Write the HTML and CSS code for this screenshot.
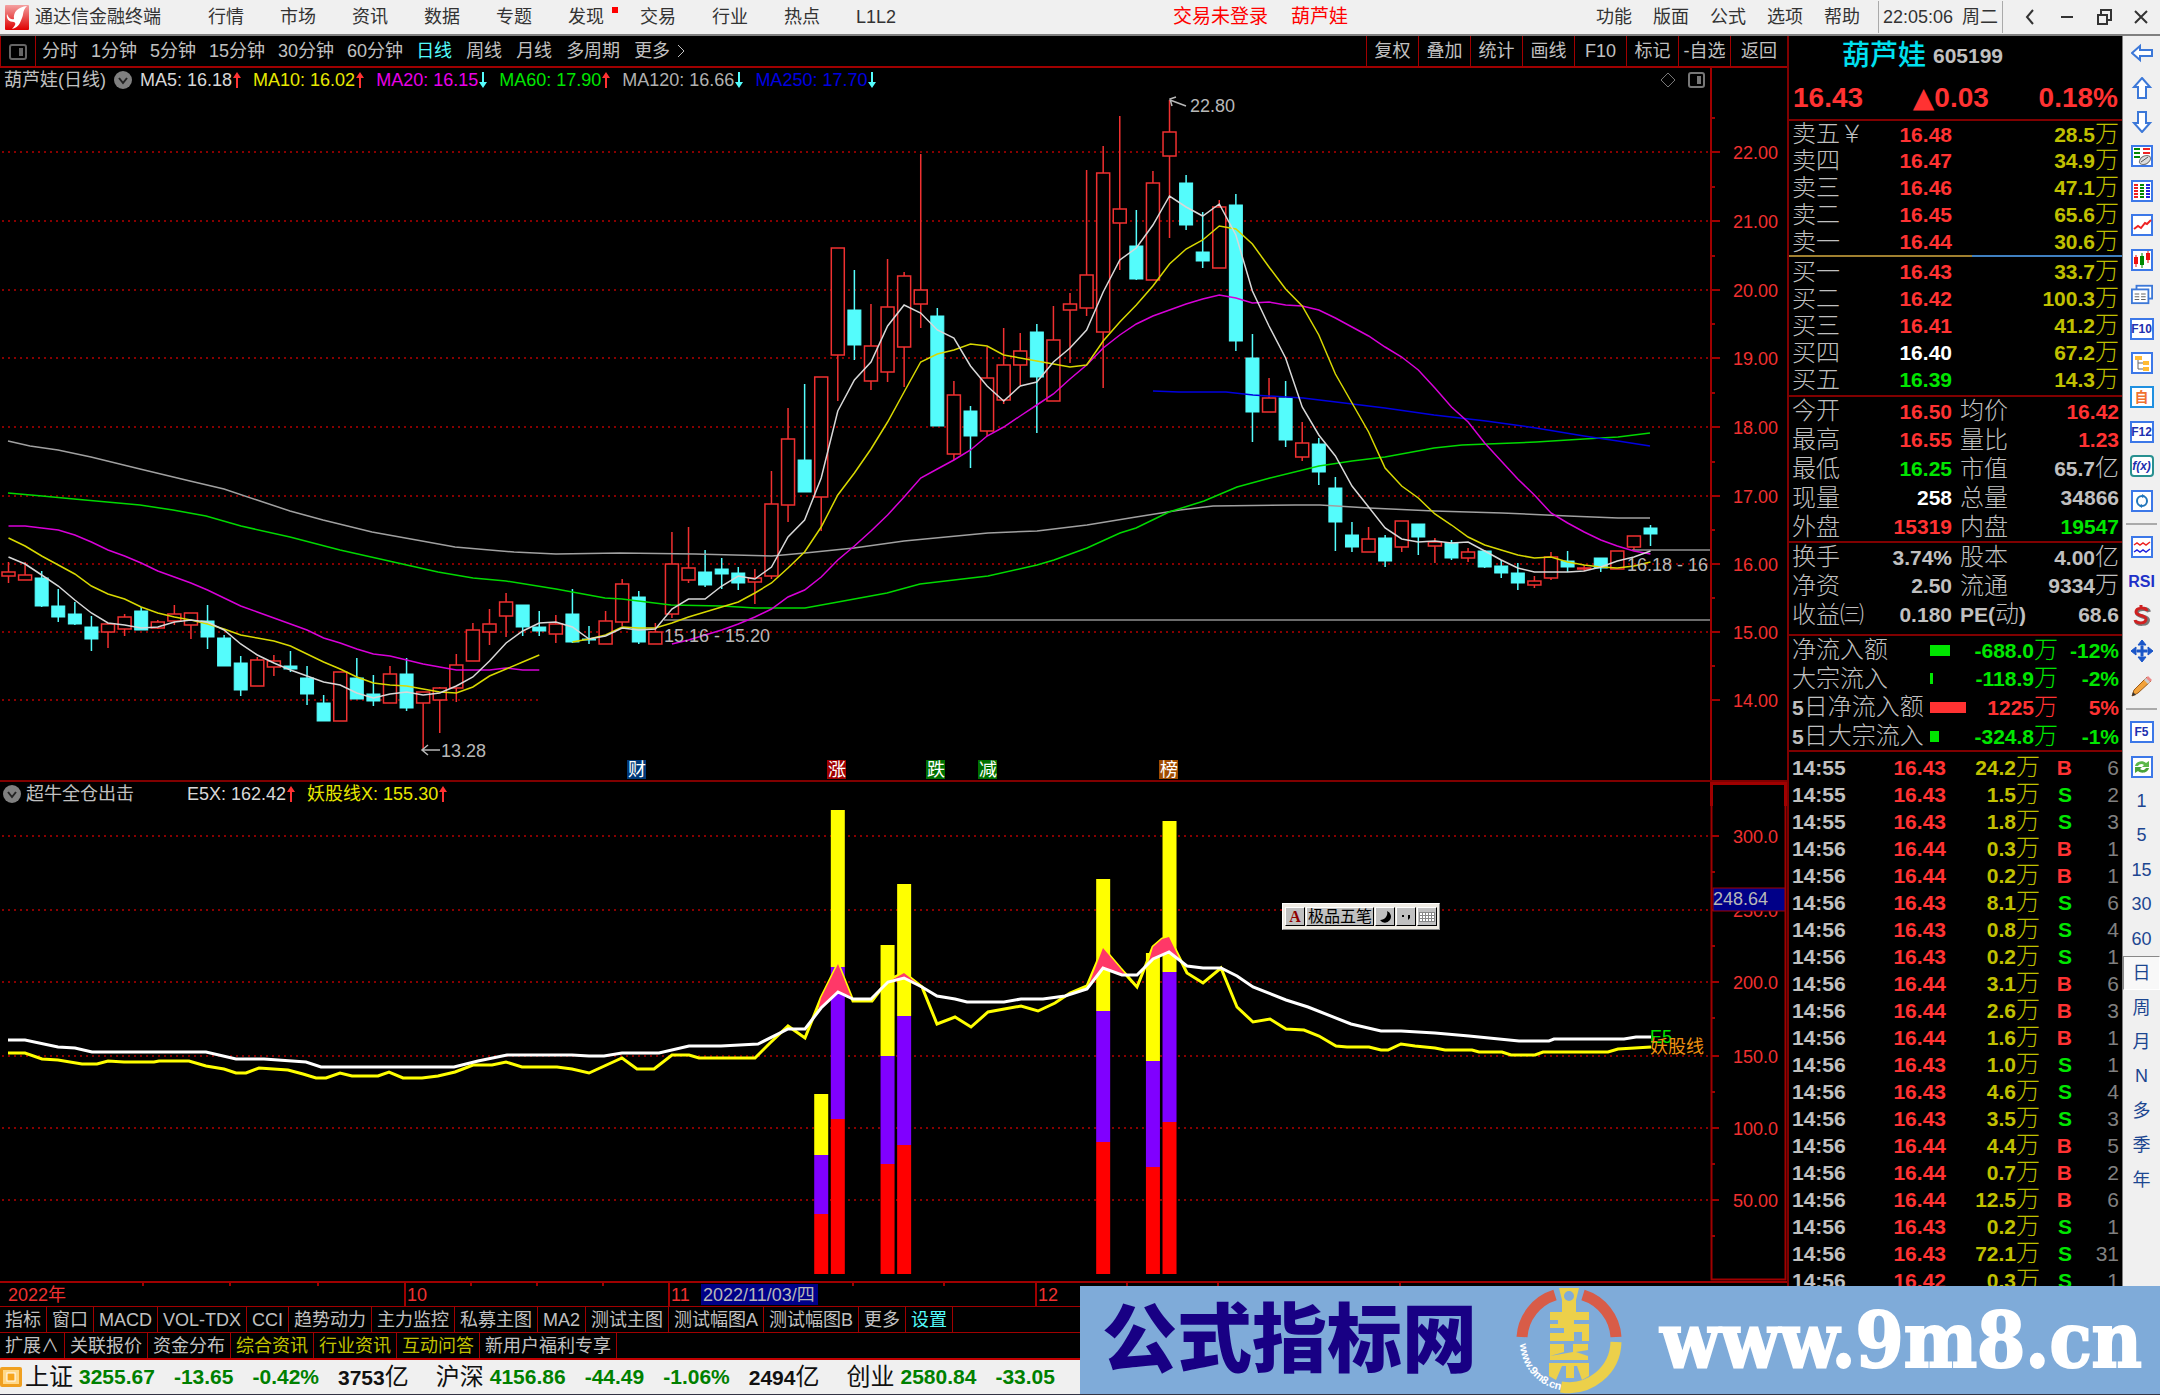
FILE: index.html
```html
<!DOCTYPE html>
<html lang="zh-CN">
<head>
  <meta charset="UTF-8">
  <title>通达信金融终端</title>
  <meta name="viewport" content="width=device-width, initial-scale=1.0">
  <link rel="stylesheet" href="styles.css">
</head>
<body>
  <header class="titlebar">
    <svg class="app-logo" viewBox="0 0 24 25">
      <defs>
        <linearGradient id="red" x1="0" y1="0" x2="0" y2="1">
          <stop offset="0" stop-color="#f4a0a0"/>
          <stop offset="0.5" stop-color="#e85050"/>
          <stop offset="1" stop-color="#e00000"/>
        </linearGradient>
      </defs>
      <rect width="24" height="25" rx="1" fill="url(#red)"/>
      <path d="M2 9 C4 14 7 15 9 14 C8 7 13 2 22 1 C17 6 19 9 17 13 C15 18 14 22 7 24 C11 20 11 18 9 17 C4 17 1 14 2 9 Z" fill="#fff"/>
    </svg>
    <h1 class="app-name">通达信金融终端</h1>
    <nav class="menu">
      <button>行情</button>
      <button>市场</button>
      <button>资讯</button>
      <button>数据</button>
      <button>专题</button>
      <button class="has-dot">发现</button>
      <button>交易</button>
      <button>行业</button>
      <button>热点</button>
      <button>L1L2</button>
    </nav>
    <div class="login">
      <span>交易未登录</span>
      <span>葫芦娃</span>
    </div>
    <nav class="menu menu-right">
      <button>功能</button>
      <button>版面</button>
      <button>公式</button>
      <button>选项</button>
      <button>帮助</button>
    </nav>
    <div class="clock"><time>22:05:06</time><span>周二</span></div>
    <div class="win-btns">
      <button aria-label="后退"><svg viewBox="0 0 16 20"><path d="M11 3 L5 10 L11 17"/></svg></button>
      <button aria-label="最小化"><svg viewBox="0 0 16 20"><path d="M2 10 H14"/></svg></button>
      <button aria-label="还原"><svg viewBox="0 0 16 20"><path d="M2 8 H11 V17 H2 Z M5 7 V3 H15 V13 H12"/></svg></button>
      <button aria-label="关闭"><svg viewBox="0 0 16 20"><path d="M2 4 L14 16 M14 4 L2 16"/></svg></button>
    </div>
  </header>

  <div class="main">
    <div class="board">
      <div class="toolbar">
        <button class="side-toggle" aria-label="侧栏">
          <svg viewBox="0 0 18 18"><rect x="1" y="2" width="16" height="14" rx="2"/><path d="M12 5 V13" stroke-width="4"/></svg>
        </button>
        <div class="periods">
          <button>分时</button>
          <button>1分钟</button>
          <button>5分钟</button>
          <button>15分钟</button>
          <button>30分钟</button>
          <button>60分钟</button>
          <button class="on">日线</button>
          <button>周线</button>
          <button>月线</button>
          <button>多周期</button>
          <button>更多<svg class="more-arrow" viewBox="0 0 10 18"><path d="M2 3 L8 9 L2 15"/></svg></button>
        </div>
        <div class="tools">
          <button>复权</button>
          <button>叠加</button>
          <button>统计</button>
          <button>画线</button>
          <button>F10</button>
          <button>标记</button>
          <button>-自选</button>
          <button>返回</button>
        </div>
      </div>

      <section class="price">
        <div class="legend">
          <div class="legend-main">
            <span class="legend-title">葫芦娃(日线)</span>
            <svg class="chev" viewBox="0 0 18 18"><circle cx="9" cy="9" r="9" fill="#808080"/><path d="M5 7 L9 12 L13 7" fill="none" stroke="#222" stroke-width="2"/></svg>
            <span class="ma white">MA5: 16.18<svg viewBox="0 0 10 18"><path d="M5 1 L9 7 H6 V17 H4 V7 H1 Z"/></svg></span>
            <span class="ma yellow">MA10: 16.02<svg viewBox="0 0 10 18"><path d="M5 1 L9 7 H6 V17 H4 V7 H1 Z"/></svg></span>
            <span class="ma magenta">MA20: 16.15<svg class="dn" viewBox="0 0 10 18"><path d="M5 17 L9 11 H6 V1 H4 V11 H1 Z"/></svg></span>
            <span class="ma green">MA60: 17.90<svg viewBox="0 0 10 18"><path d="M5 1 L9 7 H6 V17 H4 V7 H1 Z"/></svg></span>
            <span class="ma gray">MA120: 16.66<svg class="dn" viewBox="0 0 10 18"><path d="M5 17 L9 11 H6 V1 H4 V11 H1 Z"/></svg></span>
            <span class="ma blue">MA250: 17.70<svg class="dn" viewBox="0 0 10 18"><path d="M5 17 L9 11 H6 V1 H4 V11 H1 Z"/></svg></span>
            <svg class="legend-tools" viewBox="0 0 46 18" fill="none" stroke="#777">
              <path d="M8 2 L15 9 L8 16 L1 9 Z"/>
              <rect x="29" y="2" width="15" height="14" rx="2" stroke-width="2"/>
              <path d="M39 5 V13" stroke-width="4"/>
            </svg>
          </div>
          <div class="legend-axis"></div>
        </div>
        <svg class="chart" id="price" viewBox="0 92 1787 688"></svg>
      </section>

      <section class="indicator">
        <div class="legend">
          <div class="legend-main">
            <svg class="chev" viewBox="0 0 18 18"><circle cx="9" cy="9" r="9" fill="#808080"/><path d="M5 7 L9 12 L13 7" fill="none" stroke="#222" stroke-width="2"/></svg>
            <span class="legend-title ind-title">超牛全仓出击</span>
            <span class="ma white">E5X: 162.42<svg viewBox="0 0 10 18"><path d="M5 1 L9 7 H6 V17 H4 V7 H1 Z"/></svg></span>
            <span class="ma yellow">妖股线X: 155.30<svg viewBox="0 0 10 18"><path d="M5 1 L9 7 H6 V17 H4 V7 H1 Z"/></svg></span>
          </div>
          <div class="legend-axis"></div>
        </div>
        <svg class="chart" id="indicator" viewBox="0 806 1787 475"></svg>
      </section>

      <svg class="chart" id="dates" viewBox="0 1281 1787 25"></svg>

      <div class="tabs">
        <button>指标</button>
        <button>窗口</button>
        <button>MACD</button>
        <button>VOL-TDX</button>
        <button>CCI</button>
        <button>趋势动力</button>
        <button>主力监控</button>
        <button>私募主图</button>
        <button>MA2</button>
        <button>测试主图</button>
        <button>测试幅图A</button>
        <button>测试幅图B</button>
        <button>更多</button>
        <button class="cyan">设置</button>
      </div>
      <div class="tabs">
        <button>扩展∧</button>
        <button>关联报价</button>
        <button>资金分布</button>
        <button class="olive">综合资讯</button>
        <button class="olive">行业资讯</button>
        <button class="olive">互动问答</button>
        <button>新用户福利专享</button>
      </div>
    </div>

    <aside class="quote">
      <div class="quote-name"><strong>葫芦娃</strong><b>605199</b></div>
      <div class="quote-price"><span>16.43</span><span><span class="tri">▲</span>0.03</span><span>0.18%</span></div>

      <table class="book sell">
        <tr><th>卖五&#65509;</th><td class="up"><b>16.48</b></td><td class="vol"><b>28.5</b>万</td></tr>
        <tr><th>卖四</th><td class="up"><b>16.47</b></td><td class="vol"><b>34.9</b>万</td></tr>
        <tr><th>卖三</th><td class="up"><b>16.46</b></td><td class="vol"><b>47.1</b>万</td></tr>
        <tr><th>卖二</th><td class="up"><b>16.45</b></td><td class="vol"><b>65.6</b>万</td></tr>
        <tr><th>卖一</th><td class="up"><b>16.44</b></td><td class="vol"><b>30.6</b>万</td></tr>
      </table>
      <div class="ratio"></div>
      <table class="book buy">
        <tr><th>买一</th><td class="up"><b>16.43</b></td><td class="vol"><b>33.7</b>万</td></tr>
        <tr><th>买二</th><td class="up"><b>16.42</b></td><td class="vol"><b>100.3</b>万</td></tr>
        <tr><th>买三</th><td class="up"><b>16.41</b></td><td class="vol"><b>41.2</b>万</td></tr>
        <tr><th>买四</th><td class="flat"><b>16.40</b></td><td class="vol"><b>67.2</b>万</td></tr>
        <tr><th>买五</th><td class="down"><b>16.39</b></td><td class="vol"><b>14.3</b>万</td></tr>
      </table>

      <table class="facts">
        <tr><th>今开</th><td class="up"><b>16.50</b></td><th>均价</th><td class="up"><b>16.42</b></td></tr>
        <tr><th>最高</th><td class="up"><b>16.55</b></td><th>量比</th><td class="up"><b>1.23</b></td></tr>
        <tr><th>最低</th><td class="down"><b>16.25</b></td><th>市值</th><td><b>65.7</b>亿</td></tr>
        <tr><th>现量</th><td class="flat"><b>258</b></td><th>总量</th><td><b>34866</b></td></tr>
        <tr><th>外盘</th><td class="up"><b>15319</b></td><th>内盘</th><td class="down"><b>19547</b></td></tr>
      </table>
      <table class="facts more">
        <tr><th>换手</th><td><b>3.74%</b></td><th>股本</th><td><b>4.00</b>亿</td></tr>
        <tr><th>净资</th><td><b>2.50</b></td><th>流通</th><td><b>9334</b>万</td></tr>
        <tr><th>收益㈢</th><td><b>0.180</b></td><th><b>PE(</b>动<b>)</b></th><td><b>68.6</b></td></tr>
      </table>

      <table class="flows">
        <tr class="down"><th>净流入额</th><td class="bar"><i style="width:20px"></i></td><td><b>-688.0</b>万</td><td><b>-12%</b></td></tr>
        <tr class="down"><th>大宗流入</th><td class="bar"><i style="width:3px"></i></td><td><b>-118.9</b>万</td><td><b>-2%</b></td></tr>
        <tr class="up"><th><b>5</b>日净流入额</th><td class="bar"><i style="width:36px"></i></td><td><b>1225</b>万</td><td><b>5%</b></td></tr>
        <tr class="down"><th><b>5</b>日大宗流入</th><td class="bar"><i style="width:9px"></i></td><td><b>-324.8</b>万</td><td><b>-1%</b></td></tr>
      </table>

      <table class="ticks"><tbody id="ticks"></tbody></table>
    </aside>

    <nav class="sidebar">
      <div class="side-group">
        <button aria-label="左"><svg viewBox="0 0 22 22"><path d="M1 11 L9 4 V8 H21 V14 H9 V18 Z" fill="#fff" stroke="#3c78d8" stroke-width="2"/></svg></button>
        <button aria-label="上"><svg viewBox="0 0 22 22"><path d="M11 1 L19 10 H15 V21 H7 V10 H3 Z" fill="#fff" stroke="#3c78d8" stroke-width="2"/></svg></button>
        <button aria-label="下"><svg viewBox="0 0 22 22"><path d="M11 21 L19 12 H15 V1 H7 V12 H3 Z" fill="#fff" stroke="#3c78d8" stroke-width="2"/></svg></button>
        <button aria-label="报价"><svg viewBox="0 0 22 22"><rect x="1" y="1" width="20" height="20" fill="#fff" stroke="#3c78e8" stroke-width="2"/><path d="M3 4 H9 M3 8 H9 M3 12 H9" stroke="#080" stroke-width="2"/><path d="M12 4 H19 M12 8 H19" stroke="#e22" stroke-width="2"/><ellipse cx="14" cy="15" rx="6" ry="4" fill="#ddd" stroke="#777" transform="rotate(-30 14 15)"/><path d="M10 17 L17 12" stroke="#555"/></svg></button>
        <button aria-label="列表"><svg viewBox="0 0 22 22"><rect x="1" y="1" width="20" height="20" fill="#fff" stroke="#3c78e8" stroke-width="2"/><path d="M5 4 V18" stroke="#e22" stroke-width="4" stroke-dasharray="2 1"/><path d="M11 4 V18" stroke="#080" stroke-width="4" stroke-dasharray="2 1"/><path d="M17 4 V18" stroke="#22d" stroke-width="4" stroke-dasharray="2 1"/></svg></button>
        <button aria-label="分时图"><svg viewBox="0 0 22 22"><rect x="1" y="1" width="20" height="20" fill="#fff" stroke="#3c78e8" stroke-width="2"/><path d="M3 15 L7 12 L10 14 L14 9 L16 10 L20 6" fill="none" stroke="#e22" stroke-width="2"/></svg></button>
        <button aria-label="K线图"><svg viewBox="0 0 22 22"><rect x="1" y="1" width="20" height="20" fill="#fff" stroke="#3c78e8" stroke-width="2"/><path d="M5 6 V18 M17 2 V14" stroke="#e11"/><path d="M5 8 V15 M17 4 V11" stroke="#e11" stroke-width="4"/><path d="M11 4 V19" stroke="#080"/><path d="M11 7 V16" stroke="#080" stroke-width="4"/></svg></button>
        <button aria-label="窗口"><svg viewBox="0 0 24 22"><rect x="6" y="2" width="17" height="14" fill="#fff" stroke="#3c78d8" stroke-width="2"/><rect x="1" y="6" width="18" height="15" fill="#fff" stroke="#3c78d8" stroke-width="2"/><path d="M4 11 H9 M11 11 H16 M4 14 H9 M11 14 H16 M4 17 H9 M11 17 H16" stroke="#555"/></svg></button>
        <button class="key">F10</button>
        <button aria-label="板块"><svg viewBox="0 0 22 22"><rect x="1" y="1" width="20" height="20" fill="#fff" stroke="#3c78e8" stroke-width="2"/><path d="M7 7 V17 H13 M7 11 H13" fill="none" stroke="#666"/><rect x="4" y="4" width="7" height="4" fill="#fb3"/><rect x="12" y="9" width="6" height="4" fill="#fb3"/><rect x="12" y="15" width="6" height="4" fill="#fb3"/></svg></button>
        <button class="key self">自</button>
        <button class="key">F12</button>
        <button class="key fx">f(x)</button>
        <button aria-label="刷新"><svg viewBox="0 0 22 22"><rect x="1" y="1" width="20" height="20" fill="#fff" stroke="#3c78e8" stroke-width="2"/><circle cx="11" cy="11" r="5" fill="none" stroke="#27b" stroke-width="2"/><path d="M11 4 L14 6 L11 8 Z M11 14 L8 16 L11 18 Z" fill="#27b"/></svg></button>
      </div>
      <hr>
      <div class="side-group short">
        <button aria-label="叠加"><svg viewBox="0 0 22 22"><rect x="1" y="1" width="20" height="20" fill="#fff" stroke="#3c78e8" stroke-width="2"/><path d="M3 9 L6 7 L9 9 L12 7 L15 9 L19 6" fill="none" stroke="#e22" stroke-width="1.5"/><path d="M3 16 L6 14 L9 16 L12 14 L15 16 L19 13" fill="none" stroke="#22d" stroke-width="1.5"/></svg></button>
        <button class="rsi">RSI</button>
        <button aria-label="资金"><svg viewBox="0 0 22 22"><path d="M18 7 C17 3 6 3 6 8 C6 12 17 11 17 15 C17 20 6 20 5 16" fill="none" stroke="#777" stroke-width="4"/><path d="M16 6 C15 2 5 2 5 7 C5 11 15 10 15 14 C15 19 5 19 4 15 M10 0 V4" fill="none" stroke="#d02020" stroke-width="3"/></svg></button>
        <button aria-label="移动"><svg viewBox="0 0 22 22"><path d="M11 0 L15 5 H7 Z M11 22 L7 17 H15 Z M0 11 L5 7 V15 Z M22 11 L17 15 V7 Z M10 6 H12 V10 H16 V12 H12 V16 H10 V12 H6 V10 H10 Z" fill="#1a56c8" stroke="#1a56c8"/></svg></button>
        <button aria-label="画线"><svg viewBox="0 0 22 22"><path d="M1 21 L3 15 L16 2 L20 6 L7 18 Z" fill="#f2a23a" stroke="#9a5a18"/><path d="M14 4 L17 1 L21 5 L18 8 Z" fill="#e88"/><path d="M13 5 L15 3 L19 7 L17 9 Z" fill="#ccc"/><path d="M1 21 L2 17 L5 20 Z" fill="#333"/></svg></button>
      </div>
      <hr>
      <div class="side-group">
        <button class="key">F5</button>
        <button aria-label="换股"><svg viewBox="0 0 22 22"><rect x="1" y="1" width="20" height="20" fill="#fff" stroke="#3c78e8" stroke-width="2"/><path d="M4 10 C5 5 12 4 15 7 L18 5 V11 H11 L13 9 C11 7 8 8 7 10 Z" fill="#5cb84a"/><path d="M18 12 C17 17 10 18 7 15 L4 17 V11 H11 L9 13 C11 15 14 14 15 12 Z" fill="#49a338"/></svg></button>
        <button>1</button>
        <button>5</button>
        <button>15</button>
        <button>30</button>
        <button>60</button>
        <button class="pressed">日</button>
        <button>周</button>
        <button>月</button>
        <button>N</button>
        <button>多</button>
        <button>季</button>
        <button>年</button>
      </div>
    </nav>
  </div>

  <footer class="status">
    <svg class="status-icon" viewBox="0 0 22 20"><rect width="22" height="20" rx="2" fill="#f0a020"/><rect x="3" y="3" width="16" height="14" fill="#ffd98a"/><rect x="7" y="6" width="8" height="8" fill="#f7a51c" stroke="#fff"/></svg>
    <div class="index">上证<b>3255.67</b><b>-13.65</b><b>-0.42%</b><span><b>3753</b>亿</span></div>
    <div class="index">沪深<b>4156.86</b><b>-44.49</b><b>-1.06%</b><span><b>2494</b>亿</span></div>
    <div class="index">创业<b>2580.84</b><b>-33.05</b></div>
  </footer>

  <div class="ime">
    <button class="ime-a">A</button>
    <button class="ime-name">极品五笔</button>
    <button aria-label="半角"><svg viewBox="0 0 16 16"><path d="M10 2 A6 6 0 1 1 3 11 A7 7 0 0 0 10 2 Z"/></svg></button>
    <button aria-label="标点"><svg viewBox="0 0 16 16"><path d="M4 6 H6 V8 H4 Z M10 6 H12 V9 L10 11 Z"/></svg></button>
    <button aria-label="软键盘"><svg viewBox="0 0 16 16"><path d="M0 3 H16 V13 H0 Z" fill="#888"/><path d="M1 5 H15 M1 8 H15 M1 11 H15" stroke="#fff" stroke-width="2" stroke-dasharray="2 1"/></svg></button>
  </div>

  <a class="banner" href="#">
    <span class="banner-name">公式指标网</span>
    <svg class="banner-logo" viewBox="0 0 106 108">
      <g fill="none" stroke-width="11">
        <path d="M6 51 A47 47 0 0 1 39 9" stroke="#d85c48"/>
        <path d="M67 9 A47 47 0 0 1 100 51" stroke="#d85c48"/>
        <path d="M100 56 A47 47 0 0 1 45 101" stroke="#ecd04a"/>
      </g>
      <g fill="#ecd04a">
        <path fill-rule="evenodd" d="M43 2 H63 L60 14 V26 H73 V34 H58 V38 H73 V55 H66 V46 H58 V55 H34 V47 H48 V42 H34 V38 H42 V34 H34 V26 H46 V14 Z M53 5 A5 5 0 1 0 53 15 A5 5 0 1 0 53 5 Z"/>
        <path d="M34 58 H48 V66 L34 70 Z M57 58 H72 V64 L60 66 L72 70 V74 H34 V70 L57 66 Z M33 77 H73 V90 L66 94 L61 80 H58 V92 H50 V80 H46 L40 94 L33 90 Z"/>
      </g>
      <path id="arc" d="M4 58 A49 49 0 0 0 44 104" fill="none"/>
      <text class="arc-text"><textPath href="#arc">www.9m8.cn</textPath></text>
    </svg>
    <span class="banner-url">www.9m8.cn</span>
  </a>

  <script src="chart.js"></script>
</body>
</html>
```

FILE: styles.css
```css
* {
  margin: 0;
  padding: 0;
  box-sizing: border-box;
}

body {
  min-height: 100vh;
  display: flex;
  flex-direction: column;
  position: relative;
  overflow: hidden;
  background: #000;
  color: #c0c0c0;
  font-family: "Liberation Sans", "Noto Sans CJK SC", sans-serif;
  font-size: 18px;
  font-weight: 400;
  line-height: 24px;
}

button {
  border: 0;
  background: none;
  color: inherit;
  font: inherit;
  white-space: nowrap;
}

table {
  width: 100%;
  border-collapse: collapse;
}

b {
  font-weight: bold;
}

/* title bar */
.titlebar {
  height: 36px;
  display: flex;
  align-items: center;
  padding-left: 5px;
  background: #f0f0f0;
  border-bottom: 2px solid #808080;
  color: #333;
}

.app-logo {
  width: 24px;
  height: 25px;
}

.app-name {
  margin: 0 47px 0 6px;
  font-size: 18px;
  font-weight: 400;
}

.menu {
  display: flex;
  gap: 36px;
}

.menu-right {
  gap: 21px;
}

.has-dot {
  position: relative;
}

.has-dot::after {
  content: "";
  position: absolute;
  top: 2px;
  right: -14px;
  width: 6px;
  height: 6px;
  background: #f00;
}

.login {
  display: flex;
  gap: 23px;
  margin-left: auto;
  margin-right: 248px;
  color: #f00;
  font-size: 19px;
}

.clock {
  display: flex;
  align-items: center;
  gap: 9px;
  height: 32px;
  margin-left: 18px;
  padding: 0 4px;
  border-left: 1px solid #aaa;
  border-right: 1px solid #aaa;
}

.win-btns {
  display: flex;
  gap: 20px;
  padding: 0 10px 0 19px;
}

.win-btns button {
  width: 17px;
  height: 20px;
}

.win-btns svg {
  display: block;
  width: 16px;
  height: 20px;
  fill: none;
  stroke: #333;
  stroke-width: 2;
}

/* main area */
.main {
  flex: 1;
  display: flex;
  min-height: 0;
}

.board {
  flex: 1;
  min-width: 0;
}

.toolbar {
  height: 32px;
  display: flex;
  align-items: stretch;
  border-bottom: 2px solid #a00000;
}

.side-toggle {
  width: 36px;
  border-left: 1px solid #a00000;
  border-right: 1px solid #a00000;
}

.side-toggle svg {
  width: 18px;
  height: 18px;
  vertical-align: middle;
  fill: none;
  stroke: #666;
  stroke-width: 2;
}

.periods {
  display: flex;
  gap: 13px;
  padding-left: 6px;
}

.periods .on {
  color: #54fcfc;
}

.periods .on ~ button {
  margin-left: 1px;
}

.more-arrow {
  width: 10px;
  height: 18px;
  margin-left: 6px;
  vertical-align: -3px;
  fill: none;
  stroke: #c0c0c0;
}

.tools {
  display: flex;
  margin-left: auto;
}

.tools button {
  width: 52px;
  border-left: 1px solid #a00000;
}

.tools button:last-child {
  width: 57px;
}

/* charts */
.chart {
  display: block;
  width: 100%;
  height: auto;
}

.legend {
  height: 24px;
  display: flex;
}

.legend-main {
  flex: 1;
  display: flex;
  align-items: center;
  padding-left: 4px;
}

.legend-axis {
  width: 77px;
  border-left: 2px solid #a00000;
}

.legend-title {
  margin-right: 8px;
}

.ind-title {
  margin: 0 53px 0 5px;
}

.chev {
  width: 18px;
  height: 18px;
  margin-right: 8px;
}

.indicator .chev {
  margin: 0;
}

.indicator .legend-main {
  padding-left: 3px;
}

.ma {
  display: flex;
  align-items: center;
  margin-right: 11px;
}

.ma svg {
  width: 10px;
  height: 18px;
  fill: #ff3232;
}

.ma svg.dn {
  fill: #54fcfc;
}

.legend-tools {
  width: 46px;
  height: 18px;
  margin-left: auto;
  margin-right: 4px;
}

.white { color: #d8d8d8; }
.yellow { color: #e8e800; }
.magenta { color: #e800e8; }
.green { color: #00e600; }
.gray { color: #b0b0b0; }
.blue { color: #0000e0; }

.indicator {
  border-top: 2px solid #800000;
}

.indicator .legend-axis {
  border: 3px solid #a00000;
  border-bottom: 0;
}

.chart text {
  font-size: 18px;
  fill: #b8b8b8;
}

.chart .axis {
  fill: #f03030;
}

.chart .line {
  fill: none;
  stroke-width: 1.5;
}

.chart .thick {
  stroke-width: 3;
}

.chart .grid {
  stroke: #880000;
  stroke-dasharray: 2 4;
}

.chart .frame {
  fill: none;
  stroke: #a00000;
  stroke-width: 2;
}

.chart .up {
  fill: #000;
  stroke: #f03030;
  stroke-width: 1.5;
}

.chart .down {
  fill: #54fcfc;
  stroke: #54fcfc;
}

.chart .e5-name {
  fill: #00e600;
}

.chart .yao-name {
  fill: #f09010;
}

.tabs {
  height: 26px;
  display: flex;
  border-top: 1px solid #a00000;
}

.tabs button {
  padding: 0 5px;
  border-right: 1px solid #a00000;
}

.tabs + .tabs {
  height: 28px;
  border-bottom: 2px solid #c00000;
}

.cyan { color: #54fcfc; }
.olive { color: #c0c000; }

/* quote panel */
.quote {
  width: 336px;
  border-left: 2px solid #800000;
  border-right: 1px solid #808080;
  font-size: 24px;
}

.quote b {
  font-size: 21px;
  line-height: 20px;
}

.quote-name {
  height: 40px;
  display: flex;
  align-items: center;
  justify-content: center;
  gap: 7px;
  padding-right: 66px;
}

.quote-name strong {
  color: #00e0f0;
  font-size: 28px;
  font-weight: 500;
}

.quote-price {
  height: 43px;
  display: flex;
  align-items: center;
  justify-content: space-between;
  padding: 0 4px;
  color: #ff3232;
  font-size: 28px;
  font-weight: bold;
}

.tri {
  font-family: "DejaVu Sans", sans-serif;
}

.quote th,
.quote td {
  height: 27px;
  padding: 0 3px;
  line-height: 20px;
  white-space: nowrap;
}

.quote th {
  text-align: left;
  font-weight: 300;
}

.quote td {
  text-align: right;
  font-weight: 300;
}

.sell {
  border-top: 2px solid #800000;
}

.book {
  table-layout: fixed;
}

.book th {
  width: 84px;
}

.book td:nth-child(2) {
  width: 82px;
}

.buy {
  margin-bottom: 2px;
}

.ratio {
  height: 2px;
  margin-bottom: 1px;
  background: linear-gradient(to right, #a08030 55%, #4080c0 55%);
}

.facts {
  table-layout: fixed;
  border-top: 2px solid #800000;
}

.quote .facts th,
.quote .facts td {
  height: 29px;
}

.facts td:nth-child(2) {
  width: 82px;
}

.facts th {
  width: 84px;
}

.quote .facts th:nth-child(3) {
  width: 68px;
  padding-left: 5px;
}

.more {
  margin-bottom: 5px;
}

.flows {
  table-layout: fixed;
  margin-bottom: 2px;
  border-top: 2px solid #800000;
  border-bottom: 2px solid #800000;
}

.quote .flows th,
.quote .flows td {
  height: 29px;
}

.flows th {
  width: 138px;
  color: #c0c0c0;
}

.quote .flows .bar {
  width: 42px;
}

/* the amount runs back over the empty end of the bar column */
.flows td:nth-child(3) {
  width: 92px;
  direction: rtl;
  unicode-bidi: plaintext;
}

.bar i {
  display: block;
  height: 11px;
  background: currentColor;
}

.vol { color: #c0c000; }
.up { color: #ff3232; }
.down { color: #00e600; }
.flat { color: #fff; }

.ticks {
  table-layout: fixed;
}

.ticks td:nth-child(2) { width: 90px; }
.ticks td:nth-child(3) { width: 94px; }
.ticks td:nth-child(4) { width: 32px; }

.quote .ticks td:first-child {
  width: 70px;
  text-align: left;
}

.ticks td:last-child {
  color: #808080;
  font-size: 21px;
  font-weight: 400;
}

/* right icon strip */
.sidebar {
  width: 37px;
  background: #f0f0f0;
  color: #1c4690;
}

.side-group {
  display: grid;
  grid-auto-rows: 1fr;
  height: 482px;
}

.side-group.short {
  height: 173px;
}

.side-group button {
  display: flex;
  align-items: center;
  justify-content: center;
  line-height: 20px;
}

.side-group svg {
  width: 22px;
  height: 22px;
}

.sidebar hr {
  height: 2px;
  margin: 5px 3px;
  border: 0;
  background: #aaa;
}

.side-group .key {
  width: 24px;
  height: 22px;
  margin: auto;
  border: 2px solid #3c78e8;
  background: #fff;
  color: #2030b0;
  font-size: 12px;
  font-weight: bold;
}

.side-group .self {
  color: #f07030;
  border-color: #2090e0;
  font-size: 14px;
}

.side-group .fx {
  border-color: #289090;
  border-radius: 4px;
  font-style: italic;
}

.side-group .rsi {
  color: #2030c8;
  font-size: 16px;
  font-weight: bold;
}

.side-group .pressed {
  border: 1px solid #888;
  border-right-color: #fff;
  border-bottom-color: #fff;
  background: #f8f8f8;
}

/* index bar */
.status {
  height: 35px;
  display: flex;
  align-items: center;
  gap: 27px;
  background: #f0f0f0;
  border-bottom: 1px solid #334;
  color: #111;
  font-size: 24px;
}

.status-icon {
  width: 22px;
  height: 20px;
  margin-right: -24px;
}

.index {
  display: flex;
  align-items: center;
  gap: 19px;
}

.index b {
  color: #008000;
  font-size: 21px;
}

.index > b:first-of-type {
  margin-left: -13px;
}

.index span b {
  color: #111;
}

/* floating input method bar */
.ime {
  position: absolute;
  left: 1282px;
  top: 903px;
  display: flex;
  gap: 1px;
  padding: 3px 2px;
  background: #f0ece4;
  border: 1px solid #fff;
  border-right-color: #888;
  border-bottom-color: #888;
}

.ime button {
  height: 19px;
  padding: 0 1px;
  background: #c0c0c0;
  border: 1px solid #fff;
  border-right-color: #000;
  border-bottom-color: #000;
  color: #000;
  font-size: 16px;
  line-height: 16px;
}

.ime svg {
  display: block;
  width: 16px;
  height: 16px;
}

.ime .ime-a {
  width: 20px;
  color: #900000;
  font-family: "Liberation Serif", serif;
  font-weight: bold;
}

/* site banner */
.banner {
  position: absolute;
  right: 0;
  bottom: 1px;
  width: 50%;
  height: 108px;
  display: flex;
  align-items: center;
  justify-content: space-between;
  padding: 0 18px 0 22px;
  background: #7fabd9;
  text-decoration: none;
  white-space: nowrap;
}

.banner-name {
  color: #180084;
  font-size: 75px;
  font-weight: 900;
  line-height: 100px;
}

.banner-logo {
  width: 106px;
  height: 108px;
  overflow: visible;
}

.arc-text {
  fill: #fff;
  font-size: 11px;
  font-weight: bold;
}

.banner-url {
  color: #fff;
  font-family: "DejaVu Serif Condensed", "DejaVu Serif", serif;
  font-size: 77px;
  font-weight: bold;
  line-height: 100px;
  -webkit-text-stroke: 2px #fff;
}
```

FILE: chart.js
```js
const NS = "http://www.w3.org/2000/svg";
const STEP = 16.586;
const FIRST = 8.5;
const AXIS = 1711;

function add(svg, tag, attrs, text) {
  const el = document.createElementNS(NS, tag);
  for (const key in attrs) el.setAttribute(key, attrs[key]);
  if (text) el.textContent = text;
  svg.appendChild(el);
  return el;
}

function xOf(i) {
  return FIRST + STEP * i;
}

// ys: one y per bar, starting at bar "from"
function series(svg, ys, from, color) {
  const pts = ys.map((y, i) => xOf(from + i).toFixed(1) + "," + y).join(" ");
  add(svg, "polyline", { points: pts, class: "line", stroke: color });
}

function poly(svg, pts, color, cls) {
  add(svg, "polyline", { points: pts, class: cls || "line", stroke: color });
}

// [rising, high, top, bottom, low]
const candles = [
  [1,562,572,576,583],[1,562,575,580,580],[0,571,578,606,607],[0,589,606,617,622],[0,602,614,624,625],
  [0,616,627,639,651],[1,623,624,632,648],[1,614,617,629,636],[0,607,611,630,630],[1,620,622,628,629],
  [1,605,614,621,625],[1,613,613,625,639],[0,605,621,637,649],[0,635,638,666,666],[0,656,663,690,696],
  [1,657,660,686,686],[1,655,661,667,676],[0,651,666,669,672],[0,666,678,694,705],[0,695,703,721,721],
  [1,672,672,721,721],[0,658,678,699,699],[0,675,694,701,706],[1,666,674,703,703],[0,658,674,708,711],
  [1,692,692,703,749],[1,687,688,700,733],[1,654,665,688,702],[1,623,630,661,661],[1,609,624,632,645],
  [1,593,602,616,637],[0,605,605,627,636],[0,611,627,631,636],[1,615,624,634,643],[0,589,614,642,643],
  [0,626,639,640,644],[1,611,621,644,644],[1,579,584,622,626],[0,591,597,642,644],[1,623,632,644,644],
  [1,532,564,614,618],[1,527,568,580,583],[0,550,572,585,587],[0,558,569,574,589],[0,567,573,583,590],
  [1,569,578,582,604],[1,471,504,576,579],[1,408,439,505,522],[0,384,460,492,492],[1,377,377,497,531],
  [1,248,248,355,401],[0,270,310,345,360],[1,304,346,381,390],[1,259,307,372,382],[1,272,276,347,387],
  [1,154,290,304,328],[0,308,316,426,426],[1,381,395,454,460],[0,406,411,436,468],[1,347,378,431,436],
  [1,328,365,400,404],[1,333,351,365,385],[0,324,332,377,433],[1,306,340,401,401],[1,293,304,310,363],
  [1,170,275,308,316],[1,146,173,332,388],[1,116,209,223,270],[0,210,246,279,280],[1,171,183,280,280],
  [1,100,132,156,238],[0,175,183,225,230],[0,212,252,261,268],[1,200,207,268,268],[0,194,205,341,351],
  [0,334,358,412,442],[1,378,398,412,412],[0,381,398,440,447],[1,422,443,457,461],[0,438,444,472,485],
  [0,477,488,522,551],[0,522,535,547,552],[1,527,539,552,552],[0,535,538,561,567],[1,521,521,547,552],
  [0,524,524,537,555],[1,538,542,546,563],[0,540,543,558,560],[1,548,552,558,562],[0,550,551,567,568],
  [0,560,566,573,578],[0,563,573,583,590],[1,576,581,585,588],[1,552,557,578,580],[0,551,561,567,572],
  [1,565,568,568,571],[0,558,558,568,572],[1,551,551,569,569],[1,536,536,547,550],[0,525,528,534,546]
];

const ma5 = [
  557,564,575,586,600,613,623,625,628,627,622,620,622,630,644,655,663,670,676,682,
  685,693,698,694,692,695,693,686,677,661,643,631,623,622,627,639,636,628,630,629,
  609,599,599,586,576,579,567,537,520,478,411,380,362,326,305,313,330,338,366,386,
  401,386,382,362,348,330,292,260,248,225,196,207,216,204,235,291,326,358,407,435,
  456,486,507,528,539,542,541,543,542,551,560,568,572,572,572,571,567,561,557,551
];
const ma10a = [
  538,546,556,565,574,586,594,599,607,613,617,620,624,629,635,638,641,646,654,662,
  669,677,683,685,686,689,692,693,687,676,669,662,655
];
const ma10b = [
  642,639,635,627,628,628,623,617,612,607,602,593,583,568,552,527,495,473,449,422,
  392,362,354,350,344,346,355,358,361,364,367,365,341,322,305,286,264,249,240,226,
  229,244,267,289,306,335,374,403,432,468,486,498,514,525,537,545,550,555,558,557,
  562,565,567,568,566,562
];
const ma20a = [
  526,526,528,530,535,542,550,556,563,571,577,583,590,598,606,612,618,624,630,638,
  643,649,654,656,660,664,667,670,670,670,668,670,670
];
const ma20b = [
  644,640,635,630,624,617,609,597,590,577,560,546,531,515,497,478,469,460,450,436,
  427,416,405,394,379,365,348,335,324,316,310,304,299,295,298,303,302,305,306,310,
  318,327,336,347,357,370,388,407,422,443,461,479,495,513,523,532,540,546,551,554
];
const ma60 = "8,493 42,496 74,499 107,502 140,505 173,510 206,516 241,526 290,537 340,550 389,561 438,572 473,578 506,581 556,589 605,598 622,599 671,605 722,606 755,608 805,608 838,602 887,593 920,584 988,576 1037,565 1054,560 1087,548 1120,533 1136,528 1169,512 1204,501 1237,487 1270,478 1319,466 1352,461 1385,457 1434,448 1462,445 1536,442 1584,439 1618,437 1650,433";
const ma120 = "8,441 30,446 58,450 91,457 140,469 190,481 224,489 257,500 290,511 323,520 372,532 422,541 455,547 514,552 556,554 620,553 695,554 772,556 805,553 854,548 904,541 988,533 1037,531 1087,525 1136,517 1180,510 1213,506 1295,505 1320,505 1369,508 1434,511 1502,513 1568,516 1618,518 1650,518";
const ma250 = "1153,391 1179,392 1226,392 1253,395 1303,398 1336,402 1385,408 1434,415 1486,421 1536,428 1584,436 1618,441 1650,446";

function drawPrice() {
  const svg = document.getElementById("price");
  const rows = [152, 221, 290, 358, 427, 496, 564, 632, 700];

  rows.forEach((y, i) => {
    const end = i === 8 ? 538 : AXIS;
    add(svg, "line", { x1: 2, x2: end, y1: y, y2: y, class: "grid", "stroke-width": 2 });
    add(svg, "path", { d: `M${AXIS} ${y} h9 M${AXIS} ${y - 34} h4`, class: "frame" });
    add(svg, "text", { x: 1733, y: y + 7, class: "axis" }, (22 - i) + ".00");
  });
  add(svg, "path", { d: `M${AXIS} 92 V780`, class: "frame" });

  candles.forEach(([rising, high, top, bottom, low], i) => {
    const x = xOf(i);
    const cls = rising ? "up" : "down";
    add(svg, "path", { d: `M${x} ${high} V${top} M${x} ${bottom} V${low}`, class: cls, "stroke-width": 1.5 });
    add(svg, "rect", { x: x - 6.5, y: top, width: 13, height: Math.max(bottom - top, 1), class: cls });
  });

  add(svg, "path", { d: "M664 620 H1710 M1632 550 H1710", class: "line", stroke: "#909090" });
  poly(svg, ma120, "#a0a0a0");
  poly(svg, ma60, "#00d800");
  poly(svg, ma250, "#0000e0");
  series(svg, ma20a, 0, "#d800d8");
  series(svg, ma20b, 40, "#d800d8");
  series(svg, ma10a, 0, "#d8d800");
  series(svg, ma10b, 34, "#d8d800");
  series(svg, ma5, 0, "#d8d8d8");

  add(svg, "path", { d: "M1186 106 L1170 100 M1176 97 L1170 99 L1172 106", class: "line", stroke: "#b8b8b8" });
  add(svg, "text", { x: 1190, y: 112 }, "22.80");
  add(svg, "path", { d: "M440 750 H422 M428 745 L422 750 L428 755", class: "line", stroke: "#b8b8b8" });
  add(svg, "text", { x: 441, y: 757 }, "13.28");
  add(svg, "text", { x: 664, y: 642 }, "15.16 - 15.20");
  add(svg, "text", { x: 1627, y: 571 }, "16.18 - 16");

  const marks = [["财", 636, "#003878"], ["涨", 836, "#a00000"], ["跌", 935, "#007000"], ["减", 987, "#007000"], ["榜", 1168, "#a04c00"]];
  marks.forEach(([name, x, bg]) => {
    add(svg, "rect", { x: x - 9, y: 760, width: 19, height: 19, fill: bg });
    add(svg, "text", { x: x - 8, y: 776, style: "fill:#fff" }, name);
  });
}

// [bar index, yellow top, purple top, red top]
const stacks = [
  [49,1094,1155,1214],[50,810,967,1119],[53,945,1056,1164],[54,884,1016,1145],
  [66,879,1011,1142],[69,953,1061,1167],[70,821,972,1122]
];
const e5 = "8,1040 25,1040 58,1047 75,1048 92,1052 206,1052 236,1059 264,1059 306,1062 321,1067 454,1067 478,1061 507,1055 572,1055 589,1056 604,1056 622,1053 659,1053 689,1046 721,1046 758,1044 788,1029 805,1029 821,1008 838,992 853,999 871,999 888,982 904,978 922,987 937,996 955,999 967,1002 1004,1002 1021,999 1043,999 1065,996 1087,989 1103,968 1122,975 1137,975 1153,959 1169,952 1187,966 1203,968 1221,968 1237,976 1253,987 1286,1000 1308,1007 1351,1024 1381,1031 1401,1031 1435,1033 1469,1036 1519,1041 1549,1041 1554,1039 1624,1039 1636,1037 1651,1037";
const yao = "8,1053 25,1053 42,1059 58,1060 82,1064 97,1064 108,1061 124,1062 154,1062 159,1061 189,1061 206,1066 224,1069 236,1073 246,1073 259,1068 288,1070 303,1074 316,1078 326,1078 340,1073 352,1076 378,1076 389,1072 403,1078 422,1078 438,1076 455,1072 473,1065 492,1065 506,1062 522,1067 557,1067 572,1069 589,1073 622,1058 637,1069 654,1069 672,1055 689,1055 699,1058 755,1058 770,1043 788,1026 805,1038 821,998 838,964 853,1001 872,1001 888,980 904,973 922,987 937,1024 955,1017 971,1027 988,1012 1021,1006 1038,1011 1055,1003 1070,993 1087,986 1103,948 1120,968 1137,987 1153,947 1162,939 1169,937 1187,973 1203,983 1221,968 1237,1007 1253,1022 1270,1019 1286,1029 1304,1030 1319,1036 1336,1046 1347,1047 1369,1047 1381,1050 1388,1050 1401,1044 1415,1046 1435,1048 1445,1050 1472,1050 1479,1052 1502,1052 1511,1055 1535,1055 1543,1052 1608,1052 1618,1049 1651,1047";
const peaks = [
  "818,1010 821,998 838,964 852,999 838,992 821,1008",
  "888,982 904,973 918,984 904,978",
  "1087,989 1103,948 1120,968 1126,975 1103,968",
  "1148,964 1153,947 1162,939 1169,937 1181,962 1169,952 1153,959"
];

function drawIndicator() {
  const svg = document.getElementById("indicator");
  const base = 1274;

  ["300.0", "250.0", "200.0", "150.0", "100.0", "50.00"].forEach((label, i) => {
    const y = [836, 910, 982, 1056, 1128, 1200][i];
    add(svg, "line", { x1: 2, x2: AXIS, y1: y, y2: y, class: "grid", "stroke-width": 2 });
    add(svg, "path", { d: `M${AXIS} ${y} h8 M${AXIS} ${y + 36} h4`, class: "frame" });
    add(svg, "text", { x: 1733, y: y + 7, class: "axis" }, label);
  });
  add(svg, "path", { d: "M1711.5 806 V1279.5 H1785.5 V806", class: "frame thick" });

  stacks.forEach(([i, yellow, purple, red]) => {
    const x = xOf(i) - 7;
    add(svg, "rect", { x: x, y: yellow, width: 14, height: purple - yellow, fill: "#ffff00" });
    add(svg, "rect", { x: x, y: purple, width: 14, height: red - purple, fill: "#8000ff" });
    add(svg, "rect", { x: x, y: red, width: 14, height: base - red, fill: "#ff0000" });
  });

  poly(svg, yao, "#ffff00", "line thick");
  peaks.forEach((pts) => add(svg, "polygon", { points: pts, fill: "#ff3868" }));
  poly(svg, e5, "#ffffff", "line thick");

  add(svg, "text", { x: 1650, y: 1043, class: "e5-name" }, "E5");
  add(svg, "text", { x: 1650, y: 1053, class: "yao-name" }, "妖股线");

  add(svg, "rect", { x: 1713, y: 888, width: 72, height: 23, fill: "#000088", stroke: "#a00000" });
  add(svg, "text", { x: 1713, y: 905 }, "248.64");
}

function drawDates() {
  const svg = document.getElementById("dates");
  add(svg, "path", { d: "M0 1282 H1787", class: "frame" });
  [143, 230, 318, 471, 537, 603, 853, 944, 1127, 1218, 1400].forEach((x) => {
    add(svg, "path", { d: `M${x} 1282 v4`, class: "frame" });
  });
  [[405, "10"], [669, "11"], [1036, "12"]].forEach(([x, label]) => {
    add(svg, "path", { d: `M${x} 1282 V1306`, class: "frame" });
    add(svg, "text", { x: x + 2, y: 1301, class: "axis" }, label);
  });
  add(svg, "text", { x: 8, y: 1301, class: "axis" }, "2022年");
  add(svg, "rect", { x: 701, y: 1284, width: 117, height: 21, fill: "#000088" });
  add(svg, "text", { x: 703, y: 1301 }, "2022/11/03/四");
}

const ticks = [
  ["14:55", "16.43", "24.2", "B", 6], ["14:55", "16.43", "1.5", "S", 2], ["14:55", "16.43", "1.8", "S", 3],
  ["14:56", "16.44", "0.3", "B", 1], ["14:56", "16.44", "0.2", "B", 1], ["14:56", "16.43", "8.1", "S", 6],
  ["14:56", "16.43", "0.8", "S", 4], ["14:56", "16.43", "0.2", "S", 1], ["14:56", "16.44", "3.1", "B", 6],
  ["14:56", "16.44", "2.6", "B", 3], ["14:56", "16.44", "1.6", "B", 1], ["14:56", "16.43", "1.0", "S", 1],
  ["14:56", "16.43", "4.6", "S", 4], ["14:56", "16.43", "3.5", "S", 3], ["14:56", "16.44", "4.4", "B", 5],
  ["14:56", "16.44", "0.7", "B", 2], ["14:56", "16.44", "12.5", "B", 6], ["14:56", "16.43", "0.2", "S", 1],
  ["14:56", "16.43", "72.1", "S", 31], ["14:56", "16.42", "0.3", "S", 1]
];

function drawTicks() {
  document.getElementById("ticks").innerHTML = ticks.map(([time, price, vol, side, n]) =>
    `<tr><td><b>${time}</b></td><td class="up"><b>${price}</b></td><td class="vol"><b>${vol}</b>万</td>` +
    `<td class="${side === "B" ? "up" : "down"}"><b>${side}</b></td><td>${n}</td></tr>`
  ).join("");
}

drawPrice();
drawIndicator();
drawDates();
drawTicks();
```
